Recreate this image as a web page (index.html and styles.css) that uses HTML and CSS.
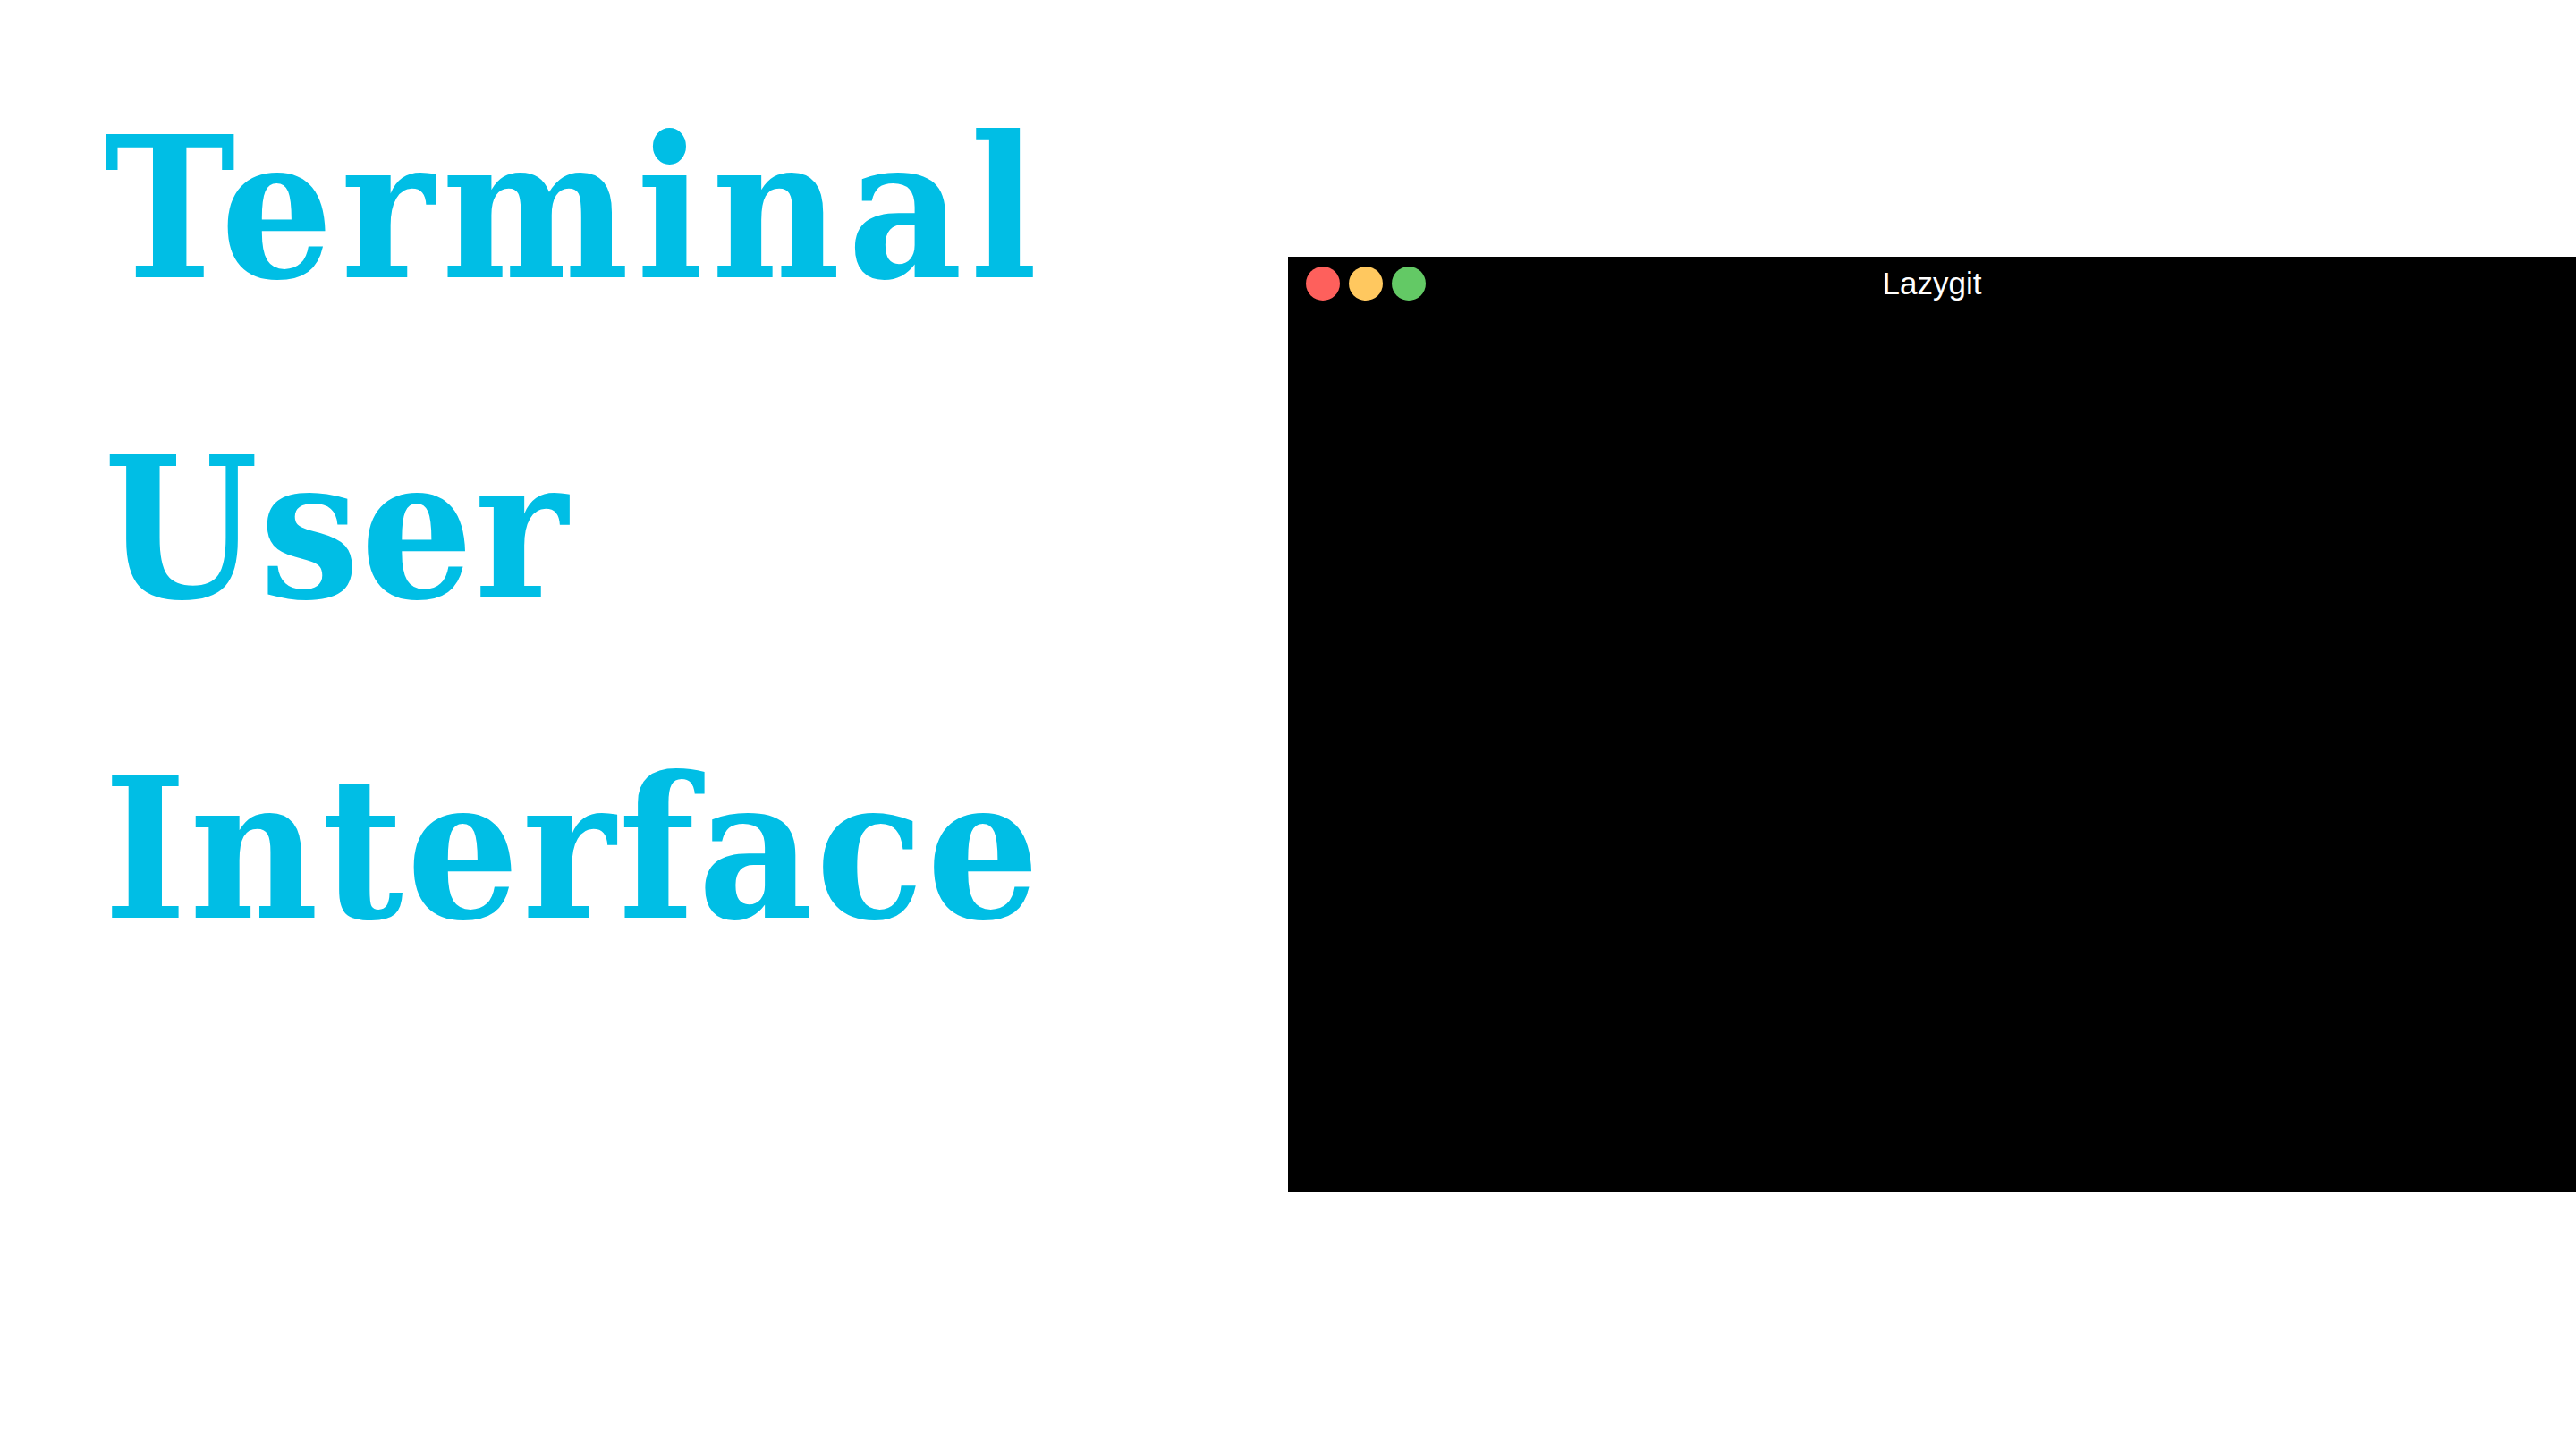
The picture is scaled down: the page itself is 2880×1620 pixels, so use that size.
FILE: index.html
```html
<!DOCTYPE html>
<html>
<head>
<meta charset="utf-8">
<title>Terminal User Interface</title>
<link rel="stylesheet" href="styles.css">
</head>
<body>
<main class="slide">
  <section class="headline">
    <div class="word word-wide">Terminal</div>
    <div class="word">User</div>
    <div class="word word-mid">Interface</div>
  </section>
  <section class="stage">
    <div class="window">
      <div class="titlebar">
        <div class="lights">
          <span class="light red"></span>
          <span class="light yellow"></span>
          <span class="light green"></span>
        </div>
        <div class="title">Lazygit</div>
      </div>
      <div class="screen"></div>
    </div>
  </section>
</main>
</body>
</html>
```
FILE: styles.css
```css
html, body {
  margin: 0;
  padding: 0;
  background: #ffffff;
}
.slide {
  width: 2880px;
  height: 1620px;
  display: flex;
  overflow: hidden;
}
.headline {
  width: 1440px;
  flex: none;
  box-sizing: border-box;
  padding: 54px 0 0 116px;
  font-family: "DejaVu Serif", serif;
  font-stretch: condensed;
  font-weight: bold;
  font-size: 220px;
  line-height: 358px;
  color: #00bee5;
}
.word {
  white-space: nowrap;
  letter-spacing: 1.5px;
}
.word-wide {
  letter-spacing: 8.5px;
}
.word-mid {
  letter-spacing: 3.5px;
}
.stage {
  flex: 1;
  display: flex;
  align-items: center;
}
.window {
  width: 1440px;
  height: 1046px;
  background: #000000;
  display: flex;
  flex-direction: column;
}
.titlebar {
  height: 60px;
  display: flex;
  align-items: center;
  position: relative;
  padding-left: 20px;
}
.lights {
  display: flex;
  gap: 10px;
}
.light {
  width: 38px;
  height: 38px;
  border-radius: 50%;
}
.red { background: #fe605c; }
.yellow { background: #ffc85f; }
.green { background: #63c965; }
.title {
  position: absolute;
  left: 0;
  right: 0;
  text-align: center;
  font-family: "Liberation Sans", Arial, sans-serif;
  font-size: 35px;
  color: #ffffff;
}
.screen {
  flex: 1;
}
```
